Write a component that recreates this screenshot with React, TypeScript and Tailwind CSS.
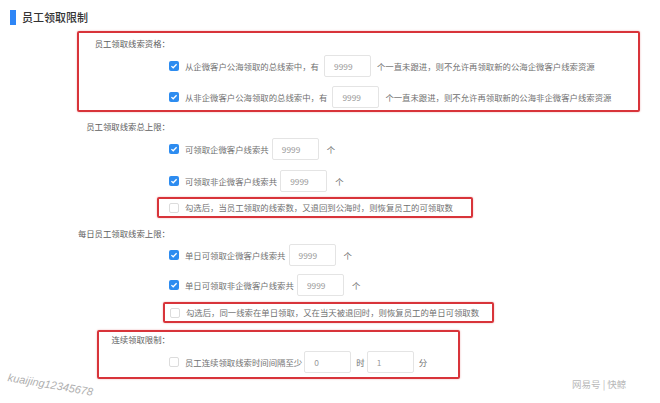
import { ReactNode } from "react";

const Check = ({ checked }: { checked: boolean }) =>
  checked ? (
    <span className="w-[10px] h-[10px] rounded-[2px] bg-[#2d8cf0] flex items-center justify-center shrink-0">
      <svg width="8" height="8" viewBox="0 0 8 8">
        <path d="M1.4 4.1 L3.2 5.8 L6.6 2.2" stroke="#fff" strokeWidth="1.3" fill="none" />
      </svg>
    </span>
  ) : (
    <span className="w-[10px] h-[10px] rounded-[2px] border border-[#dcdcdc] bg-white shrink-0" />
  );

const NumInput = ({ value }: { value: string }) => (
  <span className="w-[47px] h-[22px] border border-[#e4e4e4] rounded-[2px] flex items-center pl-[9px] text-[#999] bg-white">
    {value}
  </span>
);

const Row = ({ checked, children }: { checked: boolean; children: ReactNode }) => (
  <div className="h-[24px] flex items-center">
    <Check checked={checked} />
    <div className="ml-[6px] flex items-center">{children}</div>
  </div>
);

const RedBox = ({ className, children }: { className: string; children: ReactNode }) => (
  <div className={`border-2 border-[#d8343a] rounded-[2px] shadow-[0_0_2px_rgba(216,52,58,0.4)] ${className}`}>
    {children}
  </div>
);

export default function App() {
  return (
    <div
      className="relative w-[660px] h-[403px] bg-white overflow-hidden text-[8.4px] text-[#707070]"
      style={{ fontFamily: '"Noto Sans CJK SC", "Noto Sans", sans-serif' }}
    >
      <div className="pt-[9px] flex items-center h-[26px]">
        <span className="ml-[10px] w-[6px] h-[15px] bg-[#2f86f6]" />
        <span className="ml-[6px] text-[11px] text-[#333] font-medium">员工领取限制</span>
      </div>

      <RedBox className="mt-[5px] ml-[77px] w-[563px] h-[81px] pt-[2px]">
        <div className="w-[91px] h-[16px] flex items-center justify-end text-[#606060]">员工领取线索资格：</div>
        <div className="mt-[3px] pl-[90px]">
          <Row checked>
            <span>从企微客户公海领取的总线索中，有</span>
            <span className="ml-[5px]"><NumInput value="9999" /></span>
            <span className="ml-[6px]">个一直未跟进，则不允许再领取新的公海企微客户线索资源</span>
          </Row>
          <div className="mt-[7px]">
            <Row checked>
              <span>从非企微客户公海领取的总线索中，有</span>
              <span className="ml-[5px]"><NumInput value="9999" /></span>
              <span className="ml-[6px]">个一直未跟进，则不允许再领取新的公海非企微客户线索资源</span>
            </Row>
          </div>
        </div>
      </RedBox>

      <div className="mt-[6px] w-[170px] h-[16px] flex items-center justify-end text-[#606060]">员工领取线索总上限：</div>
      <div className="mt-[3px] pl-[169px]">
        <Row checked>
          <span>可领取企微客户线索共</span>
          <span className="ml-[3px]"><NumInput value="9999" /></span>
          <span className="ml-[8px]">个</span>
        </Row>
        <div className="mt-[8px]">
          <Row checked>
            <span>可领取非企微客户线索共</span>
            <span className="ml-[3px]"><NumInput value="9999" /></span>
            <span className="ml-[8px]">个</span>
          </Row>
        </div>
      </div>
      <RedBox className="mt-[4px] ml-[157px] w-[316px] h-[21px] pl-[10px] flex items-center">
        <Check checked={false} />
        <span className="ml-[6px]">勾选后，当员工领取的线索数，又退回到公海时，则恢复员工的可领取数</span>
      </RedBox>

      <div className="mt-[7px] w-[170px] h-[16px] flex items-center justify-end text-[#606060]">每日员工领取线索上限：</div>
      <div className="mt-[2px] pl-[169px]">
        <Row checked>
          <span>单日可领取企微客户线索共</span>
          <span className="ml-[3px]"><NumInput value="9999" /></span>
          <span className="ml-[8px]">个</span>
        </Row>
        <div className="mt-[6px]">
          <Row checked>
            <span>单日可领取非企微客户线索共</span>
            <span className="ml-[3px]"><NumInput value="9999" /></span>
            <span className="ml-[8px]">个</span>
          </Row>
        </div>
      </div>
      <RedBox className="mt-[5px] ml-[163px] w-[331px] h-[21px] pl-[5px] flex items-center">
        <Check checked={false} />
        <span className="ml-[6px]">勾选后，同一线索在单日领取，又在当天被退回时，则恢复员工的单日可领取数</span>
      </RedBox>

      <RedBox className="mt-[7px] ml-[97px] w-[363px] h-[49px]">
        <div className="w-[71px] h-[14px] flex items-center justify-end text-[#606060]">连续领取限制：</div>
        <div className="mt-[4px] pl-[70px]">
          <Row checked={false}>
            <span>员工连续领取线索时间间隔至少</span>
            <span className="ml-[2px]"><NumInput value="0" /></span>
            <span className="ml-[5px]">时</span>
            <span className="ml-[2px]"><NumInput value="1" /></span>
            <span className="ml-[5px]">分</span>
          </Row>
        </div>
      </RedBox>

      <div
        className="absolute left-[8px] top-[369px] rotate-[10deg] origin-left text-[11px] text-[#b0b0b0] italic"
        style={{ fontFamily: '"Liberation Sans", Arial, sans-serif' }}
      >
        kuaijing12345678
      </div>
      <div className="absolute left-[572px] top-[377px] text-[9.5px] text-[#b8b8b8]">网易号 | 快鲸</div>
    </div>
  );
}
